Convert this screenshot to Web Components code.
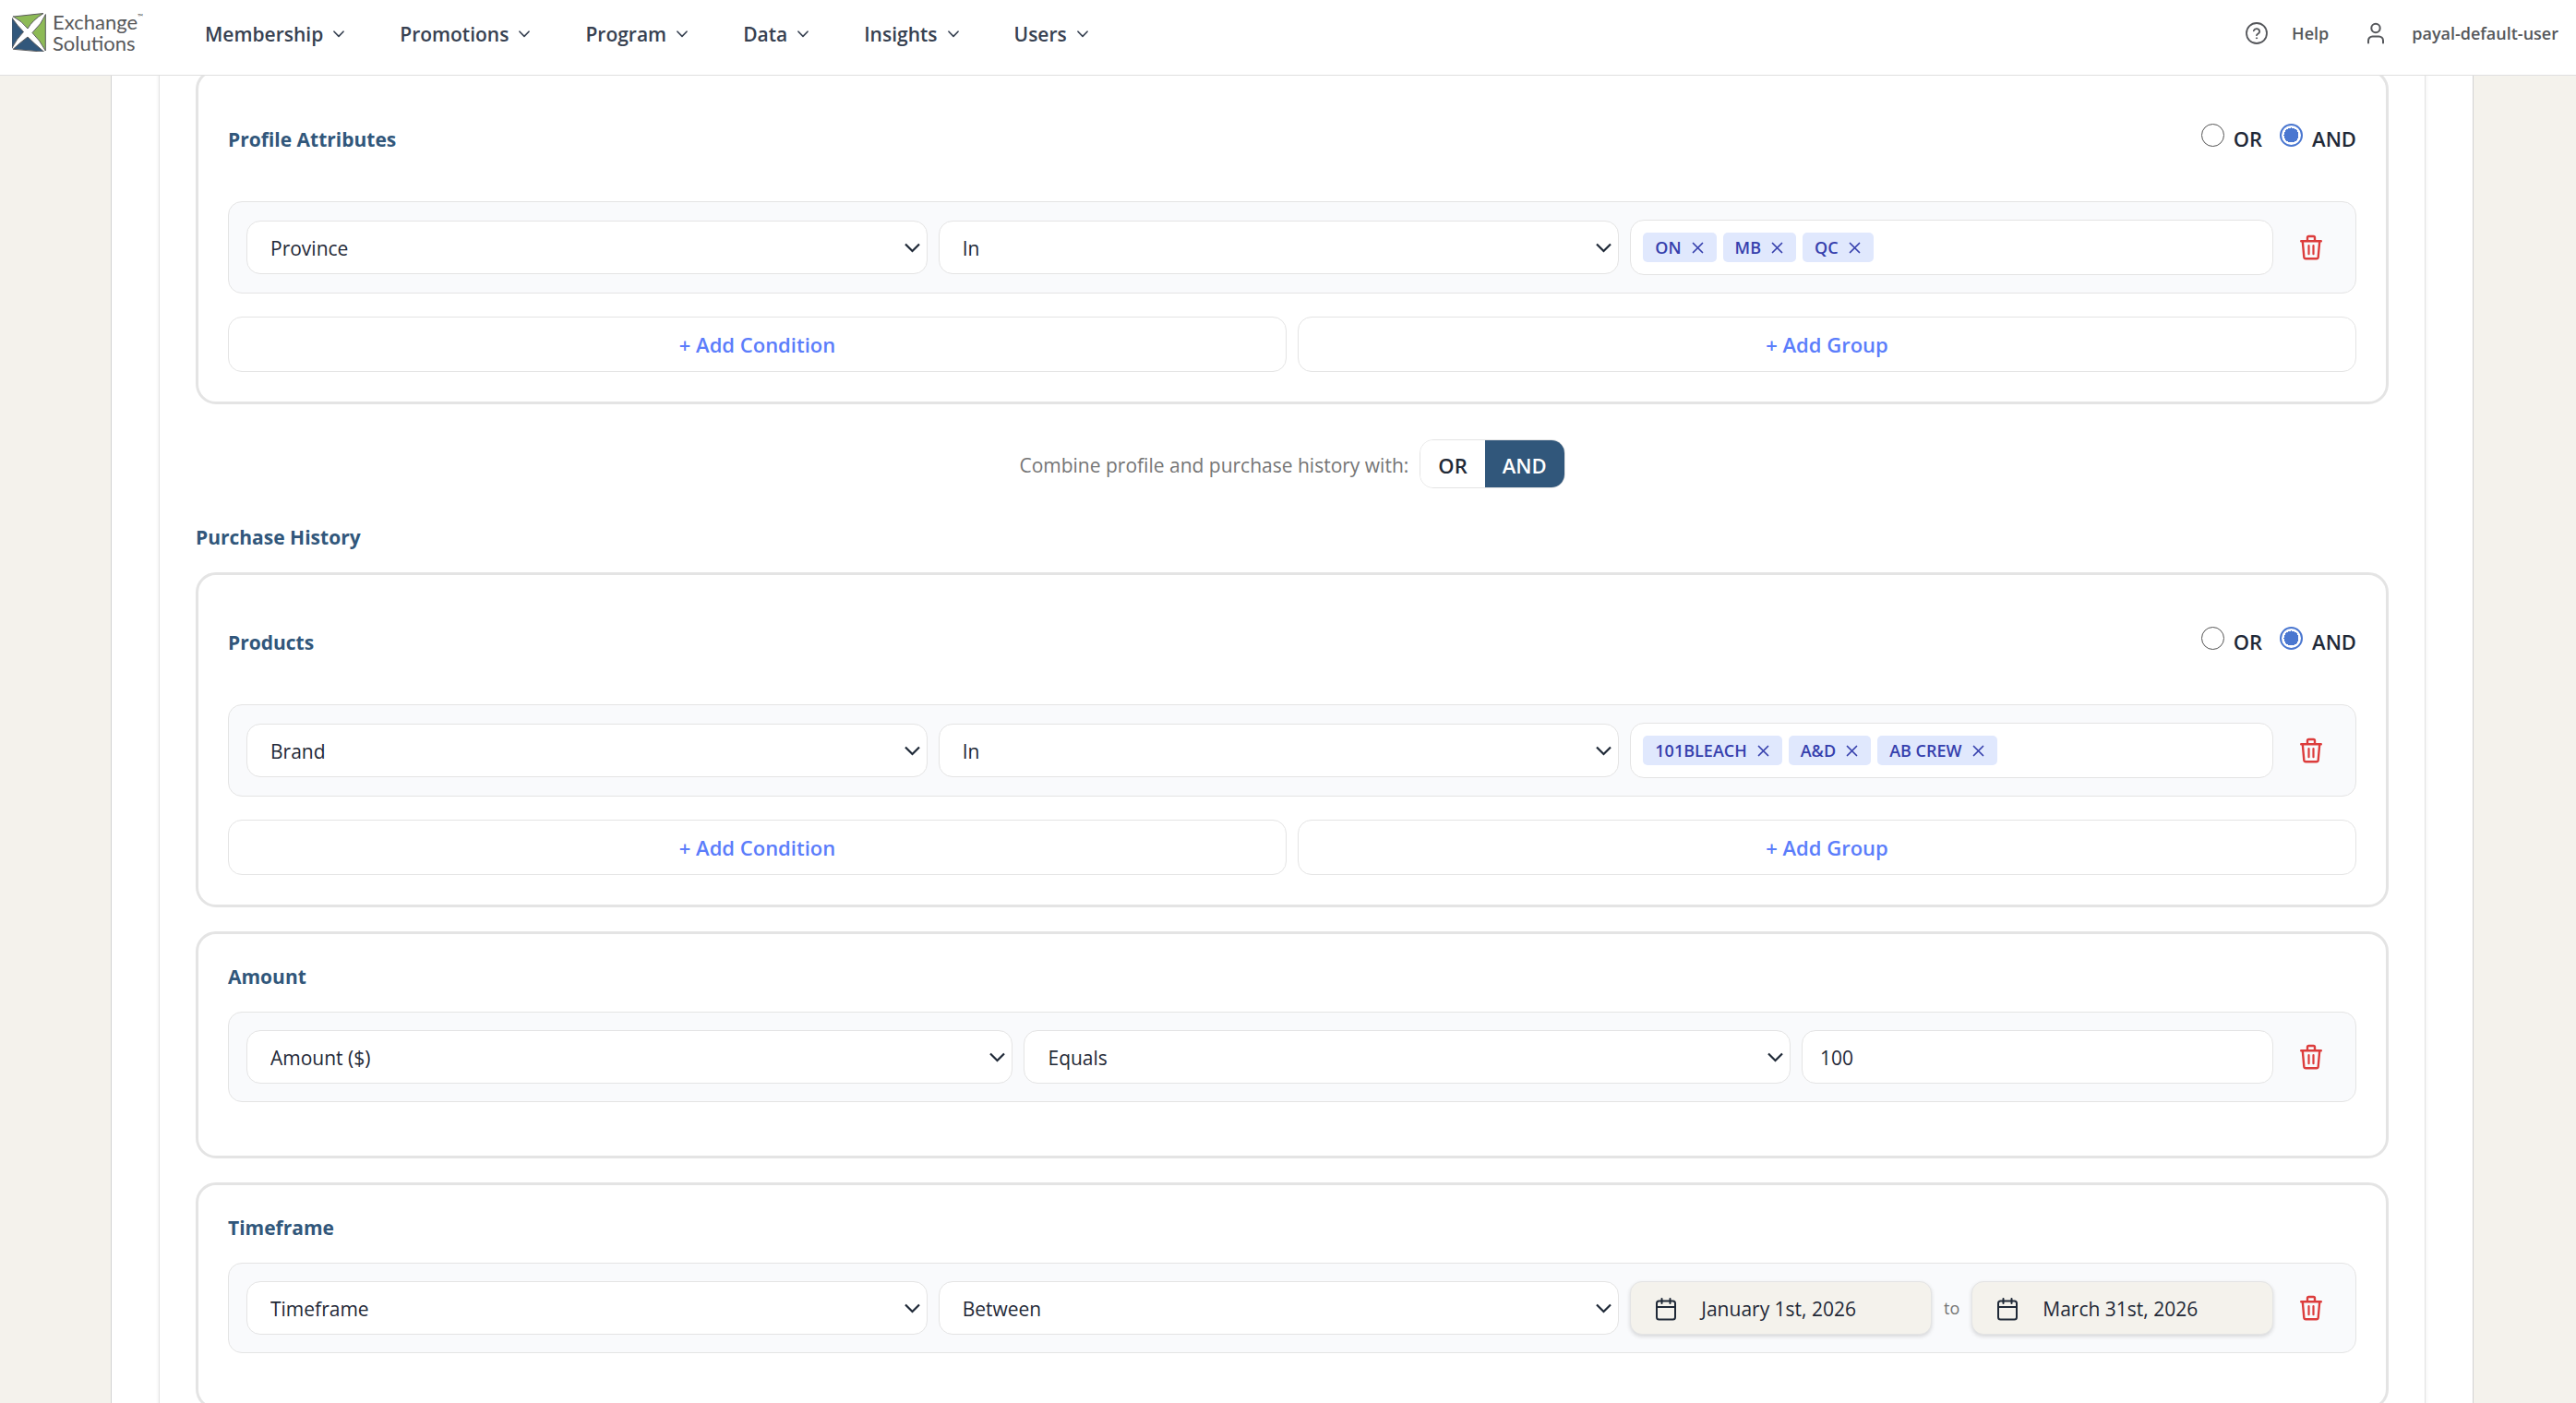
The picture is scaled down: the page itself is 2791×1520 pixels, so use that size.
<!DOCTYPE html>
<html lang="en">
<head>
<meta charset="utf-8">
<meta name="viewport" content="width=device-width, initial-scale=1">
<title>Exchange Solutions</title>
<style>
  :root {
    --line: #e4e4e4;
    --navy: #31577b;
    --ink: #1f2937;
    --muted: #757575;
    --sand: #f4f2ec;
  }
  body {
    margin: 0;
    font: 400 21px/30px "Open Sans", "Noto Sans", sans-serif;
    color: var(--ink);
    background: var(--sand);
  }
</style>
</head>
<body>
<app-shell>
  <app-header slot="header">
    <nav-item>Membership</nav-item>
    <nav-item>Promotions</nav-item>
    <nav-item>Program</nav-item>
    <nav-item>Data</nav-item>
    <nav-item>Insights</nav-item>
    <nav-item>Users</nav-item>
  </app-header>

  <rule-card heading="Profile Attributes" logic="profile-logic">
    <condition-row>
      <select-field label="Attribute" value="Province"></select-field>
      <select-field label="Operator" value="In"></select-field>
      <tag-box><tag-chip>ON</tag-chip><tag-chip>MB</tag-chip><tag-chip>QC</tag-chip></tag-box>
    </condition-row>
    <add-actions></add-actions>
  </rule-card>

  <combine-toggle></combine-toggle>
  <section-title>Purchase History</section-title>

  <card-stack>
    <rule-card heading="Products" logic="product-logic">
      <condition-row>
        <select-field label="Attribute" value="Brand"></select-field>
        <select-field label="Operator" value="In"></select-field>
        <tag-box><tag-chip>101BLEACH</tag-chip><tag-chip>A&amp;D</tag-chip><tag-chip>AB CREW</tag-chip></tag-box>
      </condition-row>
      <add-actions></add-actions>
    </rule-card>

    <rule-card heading="Amount">
      <condition-row layout="narrow">
        <select-field label="Attribute" value="Amount ($)"></select-field>
        <select-field label="Operator" value="Equals"></select-field>
        <text-field label="Value" value="100"></text-field>
      </condition-row>
    </rule-card>

    <rule-card heading="Timeframe">
      <condition-row>
        <select-field label="Attribute" value="Timeframe"></select-field>
        <select-field label="Operator" value="Between"></select-field>
        <date-range from="January 1st, 2026" to="March 31st, 2026"></date-range>
      </condition-row>
    </rule-card>
  </card-stack>
</app-shell>

<script>
const base = `
  *, *::before, *::after { box-sizing: border-box; }
  :host { display: block; box-sizing: border-box; }
  button, input, select { font: inherit; color: inherit; margin: 0; }
  button { cursor: pointer; }
  svg { display: block; flex: none; fill: none; stroke: currentColor; stroke-linecap: round; stroke-linejoin: round; }
`;

function define(name, render) {
  customElements.define(name, class extends HTMLElement {
    connectedCallback() {
      if (this.shadowRoot) return;
      const t = document.createElement('template');
      t.innerHTML = render(this);
      const s = document.createElement('style');
      s.textContent = base;
      const root = this.attachShadow({ mode: 'open' });
      root.append(s, t.content.cloneNode(true));
    }
  });
}

define('app-shell', () => `
  <style>
    :host { display: flex; flex-direction: column; height: 100vh; }
    main { flex: 1; min-height: 0; overflow: hidden; padding: 0 111px 0 120px; }
    .page { min-height: 100%; padding: 0 51px; background: #fff; border: solid #d2d2d2; border-width: 0 1px; }
    /* The panel is shown scrolled: its first card starts just under the header. */
    .panel { margin-top: -7px; padding: 0 39px; border: solid var(--line); border-width: 0 1px; box-shadow: 0 0 4px rgba(0,0,0,.08); }
  </style>
  <slot name="header"></slot>
  <main><div class="page"><div class="panel"><slot></slot></div></div></main>
`);

define('brand-logo', () => `
  <style>
    a { display: flex; gap: 7px; align-items: center; color: #58595b; text-decoration: none; }
    .name { font: 400 22px/23px Lato, "Open Sans", sans-serif; display: flex; flex-direction: column; }
    .first { display: flex; align-items: flex-start; }
    sup { font-size: 8px; line-height: 12px; }
  </style>
  <a href="#" aria-label="Exchange Solutions home">
    <svg width="37" height="42" viewBox="0 0 37 42" stroke="none">
      <path fill="#8dba56" d="M1.5 4 34 0.5Q22 8 17 17Q11 9 1.5 4Z"/>
      <path fill="#8dba56" d="M36.3 2V41Q30 29 22 21.5Q32 12 36.3 2Z"/>
      <path fill="#31577b" d="M0 5.5Q6 14 12.5 20.5Q5 28 0 38Z"/>
      <path fill="#31577b" d="M1.5 39Q9 32 17 26Q24 33 34.5 42Z"/>
    </svg>
    <span class="name"><span class="first">Exchange<sup>™</sup></span><span>Solutions</span></span>
  </a>
`);

define('nav-item', () => `
  <style>
    button { display: flex; align-items: center; gap: 11px; padding: 0; border: 0; background: none; font-weight: 600; color: #374151; }
  </style>
  <button type="button" aria-haspopup="true"><slot></slot>
    <svg width="12" height="8" viewBox="0 0 12 8" stroke-width="1.6"><path d="M1 1.2 6 6.4 11 1.2"/></svg>
  </button>
`);

define('app-header', () => `
  <style>
    :host { position: relative; z-index: 1; background: #fff; border-bottom: 1px solid #e0e0e0; }
    header { display: flex; align-items: flex-start; height: 81px; padding: 0 19px 0 13px; }
    brand-logo { width: 209px; padding-top: 12px; }
    nav { display: flex; gap: 60px; padding-top: 22px; }
    .user { display: flex; align-items: center; gap: 30px; margin-left: auto; padding-top: 21px; font-size: 18px; font-weight: 600; color: #55575b; }
    .user a { display: flex; align-items: center; gap: 26px; color: inherit; text-decoration: none; }
    .user .who { gap: 30px; margin-left: 12px; }
  </style>
  <header>
    <brand-logo></brand-logo>
    <nav aria-label="Main"><slot></slot></nav>
    <div class="user">
      <a href="#">
        <svg width="24" height="24" viewBox="0 0 24 24" stroke-width="1.8"><circle cx="12" cy="12" r="11"/><path d="M8.8 9.3a3.3 3.3 0 0 1 6.4 1c0 2.1-3.1 2.6-3.2 3.9"/><circle cx="12" cy="17.3" r=".6" fill="currentColor" stroke-width="1"/></svg>
        <span>Help</span>
      </a>
      <a href="#" class="who">
        <svg width="18" height="24" viewBox="0 0 18 24" stroke-width="2"><circle cx="9" cy="6.500" r="4.700"/><path d="M1 22.500V20a4.500 4.500 0 0 1 4.500-4.500h7A4.500 4.500 0 0 1 17 20v2.500"/></svg>
        <span>payal-default-user</span>
      </a>
    </div>
  </header>
`);

define('section-title', () => `
  <style>
    :host { margin: 38px 0 23px; }
    h2 { margin: 0; font-size: 21px; line-height: 30px; font-weight: 700; color: var(--navy); }
  </style>
  <h2><slot></slot></h2>
`);

define('card-stack', () => `
  <style>:host { display: flex; flex-direction: column; gap: 26px; padding-bottom: 26px; }</style>
  <slot></slot>
`);

define('logic-choice', el => `
  <style>
    fieldset { display: flex; gap: 19px; margin: 0; padding: 0 0 4px; border: 0; font-size: 22px; line-height: 28px; font-weight: 600; }
    label { display: flex; align-items: baseline; gap: 10px; }
    input { appearance: none; width: 25px; height: 25px; border: 1px solid #555; border-radius: 50%; background: #fff; }
    input:checked { border: 2px solid #4a77d0; background: radial-gradient(circle, #4a77d0 0 8px, #fff 8px); }
  </style>
  <fieldset aria-label="Match">
    <label><input type="radio" name="${el.getAttribute('name')}">OR</label>
    <label><input type="radio" name="${el.getAttribute('name')}" checked>AND</label>
  </fieldset>
`);

define('rule-card', el => {
  const logic = el.getAttribute('logic');
  return `
  <style>
    section { padding: 32px; border: 3px solid var(--line); border-radius: 22px; background: #fff; }
    .head { display: flex; justify-content: space-between; align-items: center; height: 28px; margin-bottom: 24px; }
    .head.group { margin: 27px 0 53px; }
    h3 { margin: 0; font-size: 21px; line-height: 28px; font-weight: 700; color: var(--navy); }
    .foot { height: 26px; }
  </style>
  <section>
    <div class="head ${logic ? 'group' : ''}"><h3>${el.getAttribute('heading')}</h3>${logic ? `<logic-choice name="${logic}"></logic-choice>` : ''}</div>
    <slot></slot>
    ${logic ? '' : '<div class="foot"></div>'}
  </section>`;
});

define('condition-row', () => `
  <style>
    :host { display: grid; grid-template-columns: 1fr 58px; gap: 12px; align-items: center; padding: 19px; border: 1px solid var(--line); border-radius: 15px; background: #f9fafc; }
    .fields { display: grid; grid-template-columns: 18fr 18fr 17fr; gap: 12px; align-items: center; }
    :host([layout="narrow"]) .fields { grid-template-columns: 13fr 13fr 8fr; }
    button { display: grid; place-items: center; height: 50px; padding: 0; border: 0; background: none; color: #dc3c3c; }
  </style>
  <div class="fields"><slot></slot></div>
  <button type="button" aria-label="Delete condition">
    <svg width="24" height="28" viewBox="0 0 24 28" stroke-width="2.400"><path d="M1.200 7.300h21.600M8 7V3.500a1.500 1.500 0 0 1 1.500-1.500h5A1.500 1.500 0 0 1 16 3.500V7M2.800 7.500 4.300 24.500a2 2 0 0 0 2 1.800h11.400a2 2 0 0 0 2-1.800L21.200 7.500"/><path stroke-width="2.200" d="M9.500 12.200v9M14.500 12.200v9"/></svg>
  </button>
`);

define('select-field', el => `
  <style>
    .wrap { display: grid; align-items: center; }
    .wrap > * { grid-area: 1 / 1; }
    select { appearance: none; width: 100%; height: 58px; padding: 2px 40px 0 25px; border: 1px solid var(--line); border-radius: 15px; background: #fff; }
    svg { justify-self: end; margin-right: 8px; pointer-events: none; }
  </style>
  <div class="wrap">
    <select aria-label="${el.getAttribute('label')}"><option>${el.getAttribute('value')}</option></select>
    <svg width="17" height="11" viewBox="0 0 17 11" stroke-width="2.200"><path stroke-linecap="butt" stroke-linejoin="miter" d="M1 1.500 8.500 9 16 1.500"/></svg>
  </div>
`);

define('text-field', el => `
  <style>
    input { display: block; width: 100%; height: 58px; padding: 2px 19px 0; border: 1px solid var(--line); border-radius: 15px; background: #fff; }
  </style>
  <input type="text" inputmode="decimal" aria-label="${el.getAttribute('label')}" value="${el.getAttribute('value')}">
`);

define('tag-box', () => `
  <style>
    :host { display: flex; align-items: center; gap: 7px; height: 60px; padding: 0 13px; border: 1px solid var(--line); border-radius: 15px; background: #fff; }
  </style>
  <slot></slot>
`);

define('tag-chip', el => `
  <style>
    :host { display: flex; align-items: center; gap: 11px; height: 32px; padding: 0 14px 0 13px; border-radius: 5px; background: #e0e8fd; color: #3640ad; font-size: 18px; font-weight: 600; }
    button { padding: 0; border: 0; background: none; }
  </style>
  <span><slot></slot></span>
  <button type="button" aria-label="Remove ${el.textContent.replace('&', '&amp;')}"><svg width="13" height="13" viewBox="0 0 13 13" stroke-width="1.700"><path d="M1.500 1.500 11.500 11.500M11.500 1.500 1.500 11.500"/></svg></button>
`);

define('add-actions', () => `
  <style>
    :host { display: grid; grid-template-columns: 1fr 1fr; gap: 12px; margin-top: 25px; }
    button { height: 60px; padding: 0; border: 1px solid var(--line); border-radius: 15px; background: #fff; color: #5b7dfb; font-size: 22px; font-weight: 600; }
  </style>
  <button type="button">+ Add Condition</button>
  <button type="button">+ Add Group</button>
`);

define('combine-toggle', () => `
  <style>
    :host { display: flex; justify-content: center; align-items: center; gap: 12px; margin-top: 38px; color: var(--muted); }
    .toggle { display: flex; height: 53px; border: 1px solid var(--line); border-radius: 15px; overflow: hidden; color: var(--ink); }
    span { padding-top: 2px; }
    button { padding: 2px 19px 0; border: 0; background: #fff; font-size: 22px; font-weight: 600; }
    button[aria-pressed="true"] { background: var(--navy); color: #fff; }
  </style>
  <span id="lead">Combine profile and purchase history with:</span>
  <div class="toggle" role="group" aria-labelledby="lead">
    <button type="button" aria-pressed="false">OR</button>
    <button type="button" aria-pressed="true">AND</button>
  </div>
`);

define('date-range', el => `
  <style>
    :host { display: grid; grid-template-columns: 1fr auto 1fr; gap: 13px; align-items: center; }
    button { display: flex; align-items: center; gap: 27px; height: 58px; padding: 2px 27px 0; border: 1px solid var(--line); border-radius: 13px; background: var(--sand); box-shadow: 0 2px 4px rgba(0,0,0,.14); }
    span { font-size: 18px; color: var(--muted); }
  </style>
  ${['from', 'to'].map(k => `<button type="button" aria-label="Date ${k}: ${el.getAttribute(k)}">
    <svg width="22" height="25" viewBox="0 0 22 25" stroke-width="2"><rect x="1" y="3.500" width="20" height="20" rx="2.500"/><path d="M1 10h20M6.500 1v5M15.500 1v5"/></svg>
    ${el.getAttribute(k)}</button>`).join('<span>to</span>')}
`);
</script>
</body>
</html>
